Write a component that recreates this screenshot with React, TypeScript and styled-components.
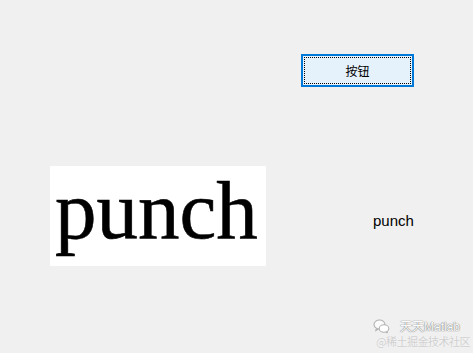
import React from "react";
import styled, { createGlobalStyle } from "styled-components";

const Global = createGlobalStyle`
  html, body { margin: 0; padding: 0; background: #f0f0f0; }
  body { font-family: "Liberation Sans", Arial, sans-serif; }
`;

const Figure = styled.div`
  position: relative;
  width: 473px;
  height: 353px;
  box-sizing: border-box;
  padding-top: 54px;
  background: #f0f0f0;
  overflow: hidden;
`;

const TopRow = styled.div`
  display: flex;
  padding-left: 301px;
`;

const PushButton = styled.button`
  width: 113px;
  height: 33px;
  box-sizing: border-box;
  margin: 0;
  padding: 0;
  border: 2px solid #0078d7;
  background: #e5f1fb;
  outline: 1px dotted #000;
  outline-offset: -4px;
  font-family: "Noto Sans CJK SC", "Liberation Sans", sans-serif;
  font-size: 12px;
  color: #000;
  display: flex;
  align-items: center;
  justify-content: center;
`;

const MiddleRow = styled.div`
  display: flex;
  align-items: flex-start;
  margin-top: 79px;
  padding-left: 50px;
`;

const Axes = styled.div`
  width: 216px;
  height: 100px;
  box-sizing: border-box;
  background: #ffffff;
  padding: 3px 0 0 5px;
`;

const BigWord = styled.span`
  display: block;
  font-family: "Liberation Serif", "Times New Roman", serif;
  font-size: 83px;
  line-height: 83px;
  color: #000;
  -webkit-text-stroke: 0.6px #000;
`;

const Label = styled.span`
  margin-left: 107px;
  margin-top: 46px;
  font-family: "Liberation Sans", Arial, sans-serif;
  font-size: 15px;
  line-height: 17px;
  color: #000;
`;

const Watermark = styled.div`
  position: absolute;
  right: 3px;
  bottom: 5px;
  display: flex;
  flex-direction: column;
  align-items: flex-end;
`;

const WmTop = styled.div`
  display: flex;
  align-items: center;
  gap: 10px;
  margin-right: 10px;
  margin-bottom: 1px;
  font-family: "Liberation Sans", "Noto Sans CJK SC", sans-serif;
  font-size: 12px;
  line-height: 14px;
  color: #fbfbfb;
  text-shadow: 0 0 1px #7a7a7a, 0 0 1px #7a7a7a;
`;

const WmBottom = styled.div`
  font-family: "Noto Sans CJK SC", sans-serif;
  font-size: 11px;
  line-height: 13px;
  letter-spacing: -0.5px;
  color: #cfcfcf;
  text-shadow: 0 0 1px #ffffff;
`;

const WeChat = () => (
  <svg width="17" height="15" viewBox="0 0 17 15" fill="none" stroke="#b0b0b0" strokeWidth="1.1">
    <ellipse cx="6.5" cy="5.5" rx="5.5" ry="4.5" fill="#fbfbfb" />
    <path d="M3.5 9.3 L2.8 11.6 L5.3 10" />
    <ellipse cx="11" cy="9.5" rx="4.8" ry="3.8" fill="#ffffff" />
    <path d="M13.2 12.8 L14.4 14.2 L14 12.3" />
  </svg>
);

export default function App() {
  return (
    <>
      <Global />
      <Figure>
        <TopRow>
          <PushButton>按钮</PushButton>
        </TopRow>
        <MiddleRow>
          <Axes>
            <BigWord>punch</BigWord>
          </Axes>
          <Label>punch</Label>
        </MiddleRow>
        <Watermark>
          <WmTop>
            <WeChat />
            <span>天天Matlab</span>
          </WmTop>
          <WmBottom>@稀土掘金技术社区</WmBottom>
        </Watermark>
      </Figure>
    </>
  );
}
